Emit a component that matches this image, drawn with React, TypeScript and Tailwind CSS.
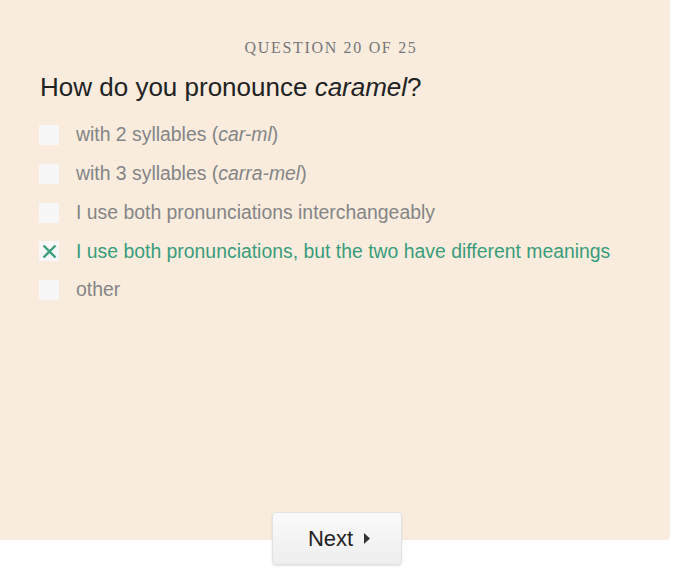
import React from 'react';

const OPTIONS: { label: React.ReactNode; checked?: boolean }[] = [
  { label: <>with 2 syllables (<em>car-ml</em>)</> },
  { label: <>with 3 syllables (<em>carra-mel</em>)</> },
  { label: <>I use both pronunciations interchangeably</> },
  { label: <>I use both pronunciations, but the two have different meanings</>, checked: true },
  { label: <>other</> },
];

export default function App() {
  return (
    <div className="relative h-[580px] w-[674px] bg-white" style={{ fontFamily: '"Liberation Sans", Arial, sans-serif' }}>
      <div className="h-[540px] w-[670px] rounded-br-[4px] bg-[#f9ecdd] pt-[36px]">
        <div
          className="pr-[8px] text-center text-[16px] tracking-[0.105em] text-[#777]"
          style={{ fontFamily: '"Liberation Serif", "Times New Roman", serif' }}
        >
          QUESTION 20 OF 25
        </div>
        <h1 className="mt-[11px] pl-[40px] text-[26px] leading-[32px] text-[#222]">
          How do you pronounce <em>caramel</em>?
        </h1>
        <ul className="mt-[22px] flex flex-col gap-[18.75px] pl-[39px]">
          {OPTIONS.map((o, i) => (
            <li key={i} className="flex h-[20px] items-center gap-[17px]">
              <span className="flex h-[20px] w-[20px] shrink-0 items-center justify-center bg-[#f7f7f7]">
                {o.checked && (
                  <svg width="15" height="15" viewBox="0 0 15 15">
                    <path d="M1.5 1.5 L13.5 13.5 M13.5 1.5 L1.5 13.5" stroke="#3d9e7e" strokeWidth="2.4" />
                  </svg>
                )}
              </span>
              <span className={`whitespace-nowrap text-[19.4px] ${o.checked ? 'text-[#3a9c7b]' : 'text-[#858585]'}`}>
                {o.label}
              </span>
            </li>
          ))}
        </ul>
      </div>
      <button className="absolute left-[272px] top-[512px] flex h-[53px] w-[130px] items-center justify-center gap-[11px] rounded-[4px] border border-[#e2e2e2] bg-gradient-to-b from-[#fafafa] to-[#eeeeee] pl-[4px] text-[22px] text-[#222] shadow-[0_1px_2px_rgba(0,0,0,0.12)]">
        Next
        <svg width="6" height="11" viewBox="0 0 6 11">
          <path d="M0 0 L6 5.5 L0 11 Z" fill="#333" />
        </svg>
      </button>
    </div>
  );
}
